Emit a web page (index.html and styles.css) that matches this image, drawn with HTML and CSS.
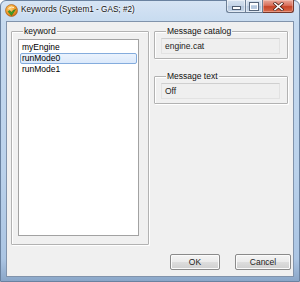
FILE: index.html
```html
<!DOCTYPE html>
<html>
<head>
<meta charset="utf-8">
<link rel="stylesheet" href="styles.css">
</head>
<body>
<div class="window">
  <div class="titlebar">
    <svg class="app-icon" width="13" height="13" viewBox="0 0 13 13">
      <defs>
        <radialGradient id="og" cx="0.4" cy="0.35" r="0.7">
          <stop offset="0" stop-color="#ffd27a"/>
          <stop offset="0.6" stop-color="#f09a2a"/>
          <stop offset="1" stop-color="#c0620e"/>
        </radialGradient>
      </defs>
      <circle cx="6.5" cy="6.5" r="6" fill="url(#og)" stroke="#a45a14" stroke-width="0.6"/>
      <path d="M3 7.5 L6.5 11.5 L10.5 5.5 L8 6.5 L6.5 8.5 L4.8 6.5 Z" fill="#3da12a" stroke="#246d18" stroke-width="0.5"/>
      <path d="M3.5 4.5 Q6 2 9 3.5" fill="none" stroke="#fff4d0" stroke-width="1"/>
    </svg>
    <span class="title">Keywords (System1 - GAS; #2)</span>
    <div class="caption-buttons">
      <div class="cap-btn cap-min"><span class="min-glyph"></span></div>
      <div class="cap-btn cap-max"><span class="max-glyph"></span></div>
      <div class="cap-btn cap-close">
        <svg width="11" height="9" viewBox="0 0 11 9">
          <path d="M2 1.5 L9 7.5 M9 1.5 L2 7.5" stroke="#4a2018" stroke-width="3" stroke-linecap="square"/>
          <path d="M2 1.5 L9 7.5 M9 1.5 L2 7.5" stroke="#ffffff" stroke-width="1.6" stroke-linecap="square"/>
        </svg>
      </div>
    </div>
  </div>
  <div class="client">
    <div class="main-row">
      <div class="group group-keyword">
        <span class="group-label">keyword</span>
        <div class="listbox">
          <div class="item">myEngine</div>
          <div class="item selected">runMode0</div>
          <div class="item">runMode1</div>
        </div>
      </div>
      <div class="right-col">
        <div class="group group-small">
          <span class="group-label">Message catalog</span>
          <div class="textbox">engine.cat</div>
        </div>
        <div class="group group-small">
          <span class="group-label">Message text</span>
          <div class="textbox">Off</div>
        </div>
      </div>
    </div>
    <div class="button-row">
      <div class="btn btn-ok">OK</div>
      <div class="btn btn-cancel">Cancel</div>
    </div>
  </div>
</div>
</body>
</html>
```

FILE: styles.css
```css
html, body {
  margin: 0;
  padding: 0;
  background: #ffffff;
}
body {
  width: 300px;
  height: 282px;
  overflow: hidden;
  font-family: "Liberation Sans", Arial, sans-serif;
  font-size: 8.5px;
  color: #000;
}
.window {
  width: 300px;
  height: 282px;
  box-sizing: border-box;
  border: 1px solid #6a82a0;
  border-radius: 6px 6px 0 0;
  background: linear-gradient(180deg, #d6e4f4 0%, #c6daef 8%, #bbd2eb 60%, #abc5e3 92%, #8aa6c8 100%);
  display: flex;
  flex-direction: column;
  padding: 0 5px 5px 5px;
}
.titlebar {
  height: 20px;
  display: flex;
  align-items: flex-start;
  flex: none;
}
.app-icon {
  margin-top: 3px;
  margin-left: -1px;
  flex: none;
}
.title {
  margin-left: 3px;
  margin-top: 4px;
  font-size: 8.2px;
  line-height: 10px;
  color: #111;
  text-shadow: 0 0 3px #ffffff, 0 0 2px #ffffff;
  white-space: nowrap;
}
.caption-buttons {
  margin-left: auto;
  margin-top: -1px;
  margin-right: 0;
  display: flex;
  height: 14px;
}
.cap-btn {
  height: 13px;
  box-sizing: border-box;
  border: 1px solid #6c7f96;
  border-top: none;
  display: flex;
  align-items: center;
  justify-content: center;
}
.cap-min {
  width: 19px;
  border-radius: 0 0 0 3px;
  border-right: none;
  background: linear-gradient(180deg, #d7e3f0 0%, #c4d4e6 50%, #b2c5dc 51%, #c6d6e8 100%);
  box-shadow: inset 0 0 0 1px rgba(255,255,255,0.5);
}
.cap-max {
  width: 18px;
  background: linear-gradient(180deg, #d7e3f0 0%, #c4d4e6 50%, #b2c5dc 51%, #c6d6e8 100%);
  box-shadow: inset 0 0 0 1px rgba(255,255,255,0.5);
}
.cap-close {
  width: 31px;
  border-left: none;
  border-color: #74382c;
  border-radius: 0 0 3px 0;
  background: linear-gradient(180deg, #e9a99b 0%, #d9705b 45%, #c74528 55%, #d86b4c 100%);
  box-shadow: inset 0 0 0 1px rgba(255,220,210,0.4);
}
.min-glyph {
  display: block;
  width: 7px;
  height: 2px;
  margin-top: 4px;
  background: #fff;
  border: 1px solid #4f5d70;
}
.max-glyph {
  display: block;
  width: 6px;
  height: 4px;
  border: 1px solid #fff;
  border-top-width: 2px;
  outline: 1px solid #56657a;
}
.client {
  flex: 1;
  background: #f0f0f0;
  border: 1px solid #8193ab;
  display: flex;
  flex-direction: column;
  padding: 9px 2px 6px 4px;
}
.main-row {
  display: flex;
  height: 214px;
}
.group {
  box-sizing: border-box;
  border: 1px solid #b2b2b2;
  box-shadow: inset 1px 1px 0 #ffffff, 1px 1px 0 #ffffff;
  border-radius: 1px;
}
.group-label {
  display: block;
  width: max-content;
  margin-top: -6px;
  margin-left: 5px;
  padding: 0 1px;
  background: #f0f0f0;
  line-height: 10px;
  height: 10px;
  color: #111;
}
.group-keyword {
  width: 138px;
  height: 214px;
  display: flex;
  flex-direction: column;
  padding: 0 9px 8px 6px;
}
.listbox {
  margin-top: 3px;
  flex: 1;
  background: #ffffff;
  border: 1px solid #a2a2a2;
  padding: 2px 1px;
}
.item {
  height: 11px;
  line-height: 11px;
  padding-left: 2px;
  box-sizing: border-box;
  white-space: nowrap;
}
.item.selected {
  border: 1px solid #84acdd;
  border-radius: 2px;
  background: linear-gradient(180deg, #ebf3fd 0%, #dbe9fb 100%);
  line-height: 9px;
  padding-left: 1px;
}
.right-col {
  width: 134px;
  margin-left: 5px;
  display: flex;
  flex-direction: column;
  gap: 17px;
}
.group-small {
  height: 28px;
  padding: 0 7px 5px 6px;
}
.textbox {
  margin-top: 2px;
  height: 16px;
  box-sizing: border-box;
  border: 1px solid #e2e2e2;
  border-top-color: #cfcfcf;
  background: #efefef;
  padding-left: 3px;
  line-height: 14px;
  color: #222;
}
.button-row {
  margin-top: 9px;
  display: flex;
  justify-content: flex-end;
  gap: 15px;
}
.btn {
  height: 16px;
  box-sizing: border-box;
  border: 1px solid #8a8a8a;
  border-radius: 2px;
  background: linear-gradient(180deg, #f4f4f4 0%, #ebebeb 48%, #dddddd 52%, #cfcfcf 100%);
  box-shadow: inset 0 0 0 1px #fbfbfb;
  text-align: center;
  line-height: 14px;
  color: #222;
}
.btn-ok {
  width: 50px;
}
.btn-cancel {
  width: 56px;
}
```
